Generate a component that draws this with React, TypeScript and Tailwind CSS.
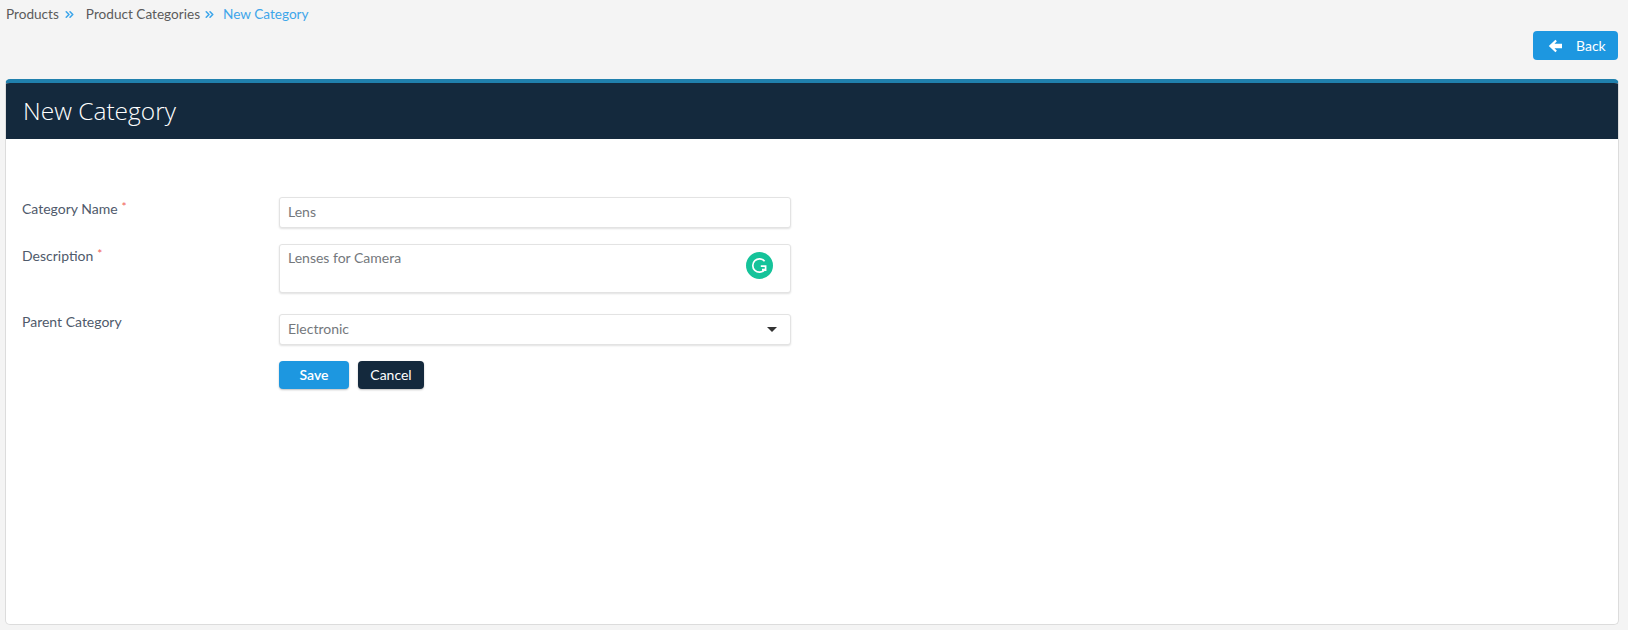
import { ChevronsRight } from "lucide-react";

const fieldClass =
  "w-[512px] rounded-[3px] border border-[#e3e3e3] bg-white px-[8px] text-[14px] text-[#74787c] shadow-[0_1px_2px_rgba(0,0,0,0.12)]";

const Label = ({ text, required, lift }: { text: string; required?: boolean; lift?: boolean }) => (
  <div className={`w-[273px] shrink-0 pl-[16px] text-[14px] leading-[20px] text-[#4f5a6b] ${lift ? "-mt-[2px]" : ""}`}>
    {text}
    {required && <span className="ml-[4px] align-[3px] text-[12px] text-[#f0605a]">*</span>}
  </div>
);

const App = () => {
  return (
    <div className="flex h-[630px] flex-col bg-[#f4f4f4] pl-[5px] pr-[9px] font-['Lato','Liberation_Sans',sans-serif]">
      {/* breadcrumb */}
      <div className="flex h-[29px] items-center pl-[1px] text-[13.6px] text-[#5b5b5b]">
        <span>Products</span>
        <ChevronsRight size={13} strokeWidth={3} className="ml-[4px] mr-[10px] text-[#3ea6ea]" />
        <span>Product Categories</span>
        <ChevronsRight size={13} strokeWidth={3} className="ml-[3px] mr-[7px] text-[#3ea6ea]" />
        <span className="text-[#3ea6ea]">New Category</span>
      </div>

      <div className="flex h-[50px] justify-end pr-[1px] pt-[2px]">
        <button className="flex h-[29px] w-[85px] items-center rounded-[4px] bg-[#1d97e0] pl-[15px] text-[14px] text-white">
          <svg width="15" height="14" viewBox="0 0 15 14" fill="currentColor">
            <path d="M7.4 0.8 L8.9 2.3 L6.5 4.7 H14 V9.3 H6.5 L8.9 11.7 L7.4 13.2 L0.8 7 Z" />
          </svg>
          <span className="ml-[13px]">Back</span>
        </button>
      </div>

      {/* card */}
      <div className="flex h-[546px] flex-col overflow-hidden rounded-[5px] border-x border-b border-[#dcdcdc] border-t-[4px] border-t-[#2080ad] bg-white">
        <div className="flex h-[56px] items-center bg-[#14293d] pl-[17px] font-['Open_Sans','Liberation_Sans',sans-serif] text-[24.5px] font-light text-white">
          New Category
        </div>

        <div className="flex flex-col pt-[58px]">
          <div className="flex h-[47px]">
            <Label text="Category Name" required />
            <input readOnly value="Lens" className={`${fieldClass} h-[31px] pb-[3px]`} />
          </div>

          <div className="flex h-[70px]">
            <Label text="Description" required />
            <div className={`${fieldClass} relative h-[49px] pt-[4px] leading-[18px]`}>
              Lenses for Camera
              <div className="absolute right-[17px] top-[7px] flex h-[27px] w-[27px] items-center justify-center rounded-full bg-[#15c39a]">
                <svg width="19" height="19" viewBox="0 0 19 19" fill="none" stroke="white" strokeWidth="1.7">
                  <path d="M14.6 5.2 A6.7 6.7 0 1 0 14.6 13.8 M10.8 10.2 H15.6 V15 M12 13.6 H15.6" />
                </svg>
              </div>
            </div>
          </div>

          <div className="flex h-[47px]">
            <Label text="Parent Category" lift />
            <div className={`${fieldClass} flex h-[31px] items-center justify-between pb-[3px]`}>
              <span>Electronic</span>
              <span className="mr-[5px] mt-[3px] h-0 w-0 border-x-[5px] border-t-[5px] border-x-transparent border-t-[#333]" />
            </div>
          </div>

          <div className="flex gap-[9px] pl-[273px]">
            <button className="h-[28px] w-[70px] rounded-[4px] bg-[#1d97e0] pb-[2px] text-[14px] font-semibold text-white shadow-[0_1px_2px_rgba(0,0,0,0.25)]">
              Save
            </button>
            <button className="h-[28px] w-[66px] rounded-[4px] bg-[#14293d] pb-[1px] text-[14px] text-white shadow-[0_1px_2px_rgba(0,0,0,0.25)]">
              Cancel
            </button>
          </div>
        </div>
      </div>
    </div>
  );
};

export default App;
